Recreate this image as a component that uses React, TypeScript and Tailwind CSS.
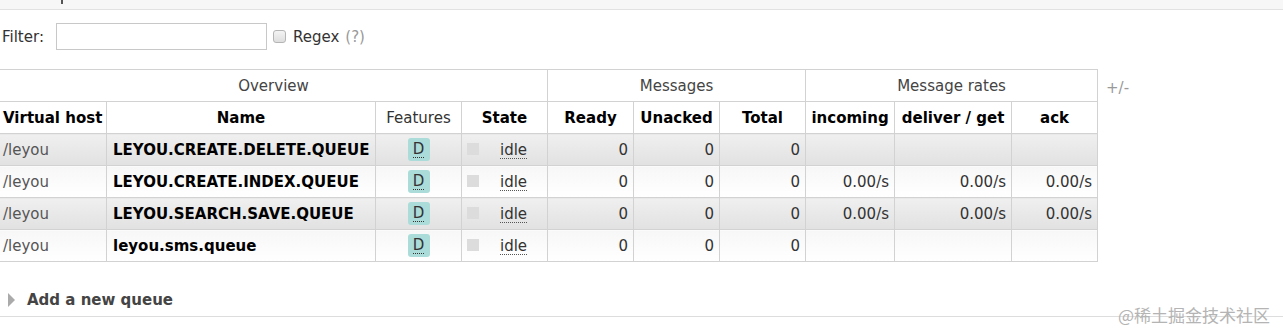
import React from 'react';

type Queue = {
  vhost: string;
  name: string;
  ready: number;
  unacked: number;
  total: number;
  rates: string[] | null;
};

const queues: Queue[] = [
  { vhost: '/leyou', name: 'LEYOU.CREATE.DELETE.QUEUE', ready: 0, unacked: 0, total: 0, rates: null },
  { vhost: '/leyou', name: 'LEYOU.CREATE.INDEX.QUEUE', ready: 0, unacked: 0, total: 0, rates: ['0.00/s', '0.00/s', '0.00/s'] },
  { vhost: '/leyou', name: 'LEYOU.SEARCH.SAVE.QUEUE', ready: 0, unacked: 0, total: 0, rates: ['0.00/s', '0.00/s', '0.00/s'] },
  { vhost: '/leyou', name: 'leyou.sms.queue', ready: 0, unacked: 0, total: 0, rates: null },
];

const cell = 'border border-[#d2d2d2] h-[32px] p-0 pt-[2px] align-middle';

export default function App() {
  return (
    <div className="relative w-[1283px] h-[331px] overflow-hidden bg-white font-['DejaVu_Sans',sans-serif] text-[15px] text-[#333]">
      {/* cut-off heading band */}
      <div className="h-[10px] bg-[#f7f7f7] border-b border-[#e2e2e2]">
        <div className="ml-[61px] w-[2px] h-[4px] bg-[#555]" />
      </div>

      {/* filter */}
      <div className="flex items-center h-[27px] mt-[13px]">
        <span className="ml-[2px] pt-[2px]">Filter:</span>
        <input
          type="text"
          className="ml-[12px] w-[211px] h-[27px] border border-[#c8c8c8] bg-white outline-none"
        />
        <span className="ml-[6px] w-[13px] h-[13px] rounded-[3px] border border-[#b5b5b5] bg-linear-to-b from-[#f4f4f4] to-[#dedede]" />
        <span className="ml-[7px] pt-[2px]">Regex</span>
        <span className="ml-[6px] pt-[2px] text-[#999]">(?)</span>
      </div>

      {/* queue table */}
      <div className="flex items-start mt-[19px]">
        <table className="table-fixed border-collapse ml-[-1px] w-[1099px]">
          <colgroup>
            <col className="w-[107px]" />
            <col className="w-[269px]" />
            <col className="w-[86px]" />
            <col className="w-[86px]" />
            <col className="w-[86px]" />
            <col className="w-[86px]" />
            <col className="w-[86px]" />
            <col className="w-[89px]" />
            <col className="w-[117px]" />
            <col className="w-[86px]" />
          </colgroup>
          <thead>
            <tr>
              <th colSpan={4} className={`${cell} font-normal text-[#444] text-center`}>Overview</th>
              <th colSpan={3} className={`${cell} font-normal text-[#444] text-center`}>Messages</th>
              <th colSpan={3} className={`${cell} font-normal text-[#444] text-center`}>Message rates</th>
            </tr>
            <tr className="text-black">
              <th className={`${cell} font-bold text-left pl-[3px]`}>Virtual host</th>
              <th className={`${cell} font-bold text-center`}>Name</th>
              <th className={`${cell} font-normal text-[#333] text-center`}>Features</th>
              <th className={`${cell} font-bold text-center`}>State</th>
              <th className={`${cell} font-bold text-center`}>Ready</th>
              <th className={`${cell} font-bold text-center`}>Unacked</th>
              <th className={`${cell} font-bold text-center`}>Total</th>
              <th className={`${cell} font-bold text-center`}>incoming</th>
              <th className={`${cell} font-bold text-center`}>deliver / get</th>
              <th className={`${cell} font-bold text-center`}>ack</th>
            </tr>
          </thead>
          <tbody>
            {queues.map((q, i) => {
              const bg =
                i % 2 === 0
                  ? 'bg-linear-to-b from-[#f0f0f0] to-[#e1e1e1]'
                  : 'bg-linear-to-b from-[#f7f7f7] to-white';
              const c = `${cell} ${bg}`;
              return (
                <tr key={q.name}>
                  <td className={`${c} pl-[3px] text-[#555]`}>{q.vhost}</td>
                  <td className={`${c} pl-[6px] font-bold text-black whitespace-nowrap`}>{q.name}</td>
                  <td className={`${c} text-center`}>
                    <span className="inline-flex items-center justify-center w-[22px] h-[23px] -mt-[2px] rounded-[3px] bg-[#abdcd9] text-[#333] align-middle">
                      <abbr className="no-underline border-b border-dotted border-[#333] leading-[15px]">D</abbr>
                    </span>
                  </td>
                  <td className={c}>
                    <div className="flex items-center pl-[5px]">
                      <span className="w-[12px] h-[12px] bg-[#dcdcdc] -mt-[4px]" />
                      <abbr className="ml-[21px] no-underline border-b border-dotted border-[#555] leading-[16px]">idle</abbr>
                    </div>
                  </td>
                  <td className={`${c} text-right pr-[5px]`}>{q.ready}</td>
                  <td className={`${c} text-right pr-[5px]`}>{q.unacked}</td>
                  <td className={`${c} text-right pr-[5px]`}>{q.total}</td>
                  <td className={`${c} text-right pr-[5px]`}>{q.rates ? q.rates[0] : ''}</td>
                  <td className={`${c} text-right pr-[5px]`}>{q.rates ? q.rates[1] : ''}</td>
                  <td className={`${c} text-right pr-[5px]`}>{q.rates ? q.rates[2] : ''}</td>
                </tr>
              );
            })}
          </tbody>
        </table>
        <span className="ml-[8px] mt-[8px] text-[#999]">+/-</span>
      </div>

      {/* add queue */}
      <div className="flex items-center mt-[29px] h-[18px]">
        <span className="ml-[8px] w-0 h-0 border-y-[7px] border-y-transparent border-l-[7px] border-l-[#aaa]" />
        <span className="ml-[12px] font-bold text-[#444]">Add a new queue</span>
      </div>
      <div className="mt-[7px] border-t border-[#ddd]" />

      {/* watermark */}
      <div className="absolute left-[1118px] top-[302px] text-[17px] text-[#b4b4b4] font-['Noto_Sans_CJK_SC',sans-serif]">
        @稀土掘金技术社区
      </div>
    </div>
  );
}
